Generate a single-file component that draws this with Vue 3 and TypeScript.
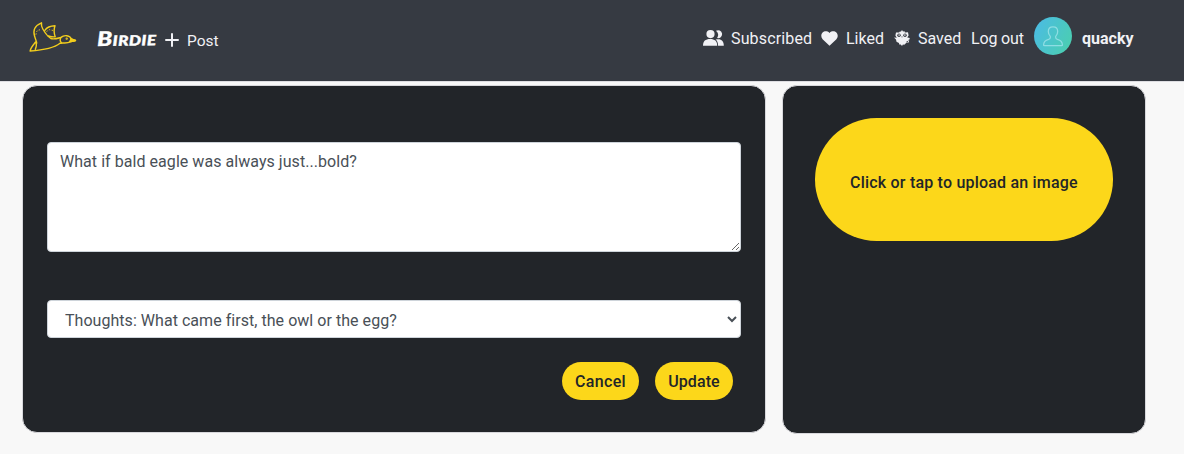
<script setup lang="ts">
import { ref } from 'vue'

const content = ref('What if bald eagle was always just...bold?')
const category = ref('thoughts')
</script>

<template>
  <div class="page">
    <header class="navbar">
      <a class="logo">
        <svg width="48" height="32" viewBox="0 0 48 32" fill="none" stroke="#f2cd1c" stroke-width="1.4" stroke-linejoin="round" stroke-linecap="round">
          <path d="M6.4 21.2C3.8 24.3 1.4 27.3 1.1 30C11 29.3 24 27.8 31 22.2C34 21.4 38.2 22.8 41.2 20.9L46.5 19.5L42.2 18C41 14 35 13.8 32 16.4C28.5 17.4 25 18.7 21.8 17.5C18.5 15.4 15.4 10.7 13.8 8C12.4 5.6 12.2 3.8 12.5 1.8C6.2 4.4 3.8 9.4 5.6 15.3C6.2 17.5 7.7 20.3 7.7 22.2" />
          <path d="M6.4 21.2C8.4 23 7.1 26.2 6.3 28.4M15.8 9.4C18 6.1 22 4.9 26 4.8C24.6 8.6 24.7 11.6 26.2 15.8C23 16 20.9 15.8 19.2 15M32 16.4C31 18.2 31 20.5 32.5 21.7M42.2 18L40.7 20.7L46.5 19.5" />
          <path d="M7 13.3L7.8 10.2L10 8.8L12.3 9.2M17.8 10.4L20.3 8.7L23.8 9.4" stroke-dasharray=".6 2.3" stroke-width=".9" />
          <circle cx="37.7" cy="17.7" r=".45" />
          <path d="M42.2 18L41.5 20.4L46.2 19.5Z" fill="#f2cd1c" />
        </svg>
      </a>
      <a class="brand"><span>Birdie</span></a>
      <a class="item post">
        <svg width="14" height="14" viewBox="0 0 14 14" stroke="#f1f1f5" stroke-width="2" stroke-linecap="round"><path d="M7 1V13M1 7H13" /></svg>
        <span>Post</span>
      </a>
      <nav class="links">
        <a class="item subscribed">
          <svg width="21" height="16" viewBox="0 0 21 16" fill="#f1f1f5">
            <path d="M13 .8a4 4 0 1 1 1.1 7.3 5.6 5.6 0 0 0-1.1-7.3Z" />
            <path d="M14.4 9.2C18.3 8.7 21 11.2 20.8 15.7h-5.7c0-2.9-.9-5-2.5-6.2Z" />
            <circle cx="7.5" cy="4.1" r="4.1" />
            <path d="M0 15.8C0 11.1 2.5 9.1 7.1 9.1s7.1 2 7.1 6.7Z" />
          </svg>
          <span>Subscribed</span>
        </a>
        <a class="item liked">
          <svg width="17" height="15" viewBox="0 0 17 15" fill="#f1f1f5"><path d="M8.5 14.8 1.6 8.2C-2.4 3.5 3.5-2.6 8.5 1.9 13.5-2.6 19.4 3.5 15.4 8.2Z" /></svg>
          <span>Liked</span>
        </a>
        <a class="item saved">
          <svg width="16" height="16" viewBox="0 0 16 16">
            <path d="M5.5 1.7 7 1.6 8 0 9 1.6l1.6-.3.3 1.1 3.1-.2.6 3.3-1.4 2.1 2.6.3-.5 1.8-1.6.4 1.5.7-.5 1.7-2.3.2-2.1 2-1.4-.3L8 16 6.8 14.6l-1.6-.1-.2-1.4-2.5-1.4L2 9.4 0 7.6l2.8.1L1.4 5.6 2 2.4l3.1.1Z" fill="#f1f1f5" />
            <g fill="#363a42"><circle cx="5" cy="5.2" r="1.7" /><circle cx="11" cy="5.2" r="1.7" /><path d="M7.3 6.6 8 7.8l.7-1.2ZM12 12l1.7-1 .6.5-1.2 1Z" /></g>
            <g fill="#f1f1f5"><circle cx="5.1" cy="5.1" r=".8" /><circle cx="10.9" cy="5.1" r=".8" /></g>
          </svg>
          <span>Saved</span>
        </a>
        <a class="item logout"><span>Log out</span></a>
        <a class="profile">
          <svg width="38" height="38" viewBox="0 0 38 38">
            <defs><linearGradient id="avatar" x1="0" y1=".25" x2="1" y2=".75"><stop stop-color="#4bbce2" /><stop offset="1" stop-color="#4bceb0" /></linearGradient></defs>
            <circle cx="19" cy="19" r="19" fill="url(#avatar)" />
            <path d="M19 9.8c-3 0-4.7 2.1-4.7 4.8 0 2 .8 3.6 2 4.8v1.4c0 1-.8 1.3-1.7 1.6-3 .8-5 2-5 5.6 0 .5.2.7.7.7h17.4c.5 0 .7-.2.7-.7 0-3.6-2-4.8-5-5.6-.9-.3-1.7-.6-1.7-1.6v-1.4c1.2-1.2 2-2.8 2-4.8 0-2.7-1.7-4.8-4.7-4.8Z" fill="none" stroke="#8edde3" stroke-width="1.25" />
          </svg>
          <strong>quacky</strong>
        </a>
      </nav>
    </header>
    <main class="content">
      <section class="card form-card">
        <textarea v-model="content" class="control message" spellcheck="false" />
        <select v-model="category" class="control category">
          <option value="thoughts">Thoughts: What came first, the owl or the egg?</option>
        </select>
        <div class="actions">
          <button class="button cancel">Cancel</button>
          <button class="button update">Update</button>
        </div>
      </section>
      <section class="card image-card">
        <button class="button upload">Click or tap to upload an image</button>
      </section>
    </main>
  </div>
</template>

<style>
body { margin: 0; background: #f8f8f8; overflow: hidden; }
</style>

<style scoped>
.page { height: 454px; background: #f8f8f8; font: 16px/24px Roboto, "Liberation Sans", sans-serif; }
.page * { box-sizing: border-box; }
.navbar { display: flex; align-items: flex-start; height: 82px; padding-left: 29px; background: #363a42; border-bottom: 1px solid #dedee2; color: #f1f1f5; white-space: nowrap; }
.logo { width: 68px; padding-top: 21px; }
svg { display: block; flex: none; }
.brand { width: 68px; padding-top: 26px; color: #fff; font: italic 900 20px/24px "Permanent Marker", Lato, sans-serif; font-variant: small-caps; letter-spacing: .4px; -webkit-text-stroke: .4px #fff; }
.brand span { display: inline-block; transform: scaleX(1.22) rotate(-1deg); transform-origin: left center; }
.item { display: flex; padding-top: 27px; }
.post span { margin: 2px 0 0 8px; font-size: 15.5px; }
.post svg { margin-top: 6px; }
.links { display: flex; margin-left: auto; width: 481px; }
.subscribed { width: 118px; }
.subscribed svg { margin: 3px 7px 0 0; }
.subscribed span { letter-spacing: .15px; }
.liked { width: 73px; }
.liked svg { margin: 4px 8px 0 0; }
.saved { width: 76px; }
.saved svg { margin: 3px 8px 0 0; }
.logout { width: 64px; padding-left: 1px; letter-spacing: -.15px; }
.profile { display: flex; align-items: flex-start; padding-top: 17px; }
.profile strong { margin: 10px 0 0 10px; font-weight: 700; }
.content { display: flex; align-items: flex-start; gap: 16px; padding: 3px 0 0 22px; }
.card { border: 1px solid #d8d8dc; border-radius: 15px; background: #222529; }
.form-card { display: flex; flex-direction: column; width: 744px; height: 348px; padding: 56px 24px 0; }
.image-card { width: 364px; height: 349px; padding: 32px; }
.control { display: block; width: 694px; margin: 0; border: 1px solid #ced4da; border-radius: 4px; background: #fff; color: #495057; font: 16px/24px Roboto, sans-serif; }
.message { height: 110px; padding: 7px 12px 5px; resize: vertical; overflow: auto; letter-spacing: .05px; }
.category { height: 38px; margin-top: 48px; padding: 7px 12px 5px 13px; letter-spacing: .04px; }
.actions { display: flex; justify-content: flex-end; gap: 16px; margin-top: 24px; padding-right: 8px; }
.button { border: 0; border-radius: 100px; background: #fcd71a; color: #222529; font: 500 16px/24px Roboto, sans-serif; padding: 0; white-space: nowrap; }
.actions .button { height: 38px; padding-top: 1px; }
.cancel { width: 77px; letter-spacing: .3px; }
.update { width: 78px; letter-spacing: .1px; }
.upload { width: 298px; height: 123px; padding-top: 6px; letter-spacing: .2px; }
</style>
